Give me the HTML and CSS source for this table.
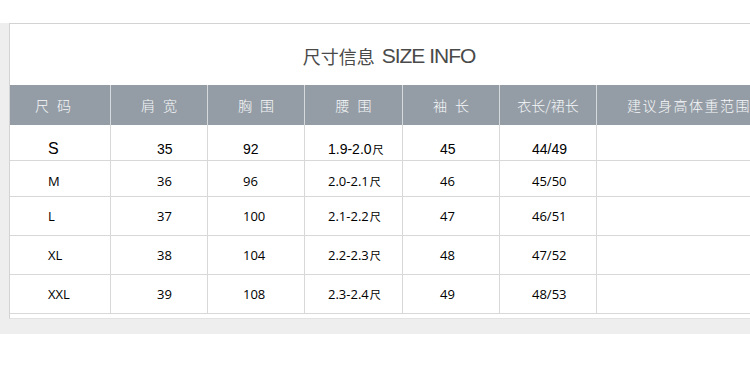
FILE: index.html
```html
<!DOCTYPE html>
<html lang="zh">
<head>
<meta charset="utf-8">
<title>尺寸信息 SIZE INFO</title>
<link rel="stylesheet" href="styles.css">
</head>
<body>
<div class="top-space"></div>
<div class="panel">
  <div class="card">
    <div class="title"><span class="title-cn">尺寸信息</span> <span class="title-en">SIZE INFO</span></div>
    <div class="row head">
      <div class="cell c1">尺 码</div>
      <div class="cell c2">肩 宽</div>
      <div class="cell c3">胸 围</div>
      <div class="cell c4">腰 围</div>
      <div class="cell c5">袖 长</div>
      <div class="cell c6">衣长/裙长</div>
      <div class="cell c7">建议身高体重范围</div>
    </div>
    <div class="row data first">
      <div class="cell c1"><span class="big">S</span></div>
      <div class="cell c2">35</div>
      <div class="cell c3">92</div>
      <div class="cell c4">1.9-2.0<span class="unit">尺</span></div>
      <div class="cell c5">45</div>
      <div class="cell c6">44/49</div>
      <div class="cell c7"></div>
    </div>
    <div class="row data short">
      <div class="cell c1">M</div>
      <div class="cell c2">36</div>
      <div class="cell c3">96</div>
      <div class="cell c4">2.0-2.1<span class="unit">尺</span></div>
      <div class="cell c5">46</div>
      <div class="cell c6">45/50</div>
      <div class="cell c7"></div>
    </div>
    <div class="row data">
      <div class="cell c1">L</div>
      <div class="cell c2">37</div>
      <div class="cell c3">100</div>
      <div class="cell c4">2.1-2.2<span class="unit">尺</span></div>
      <div class="cell c5">47</div>
      <div class="cell c6">46/51</div>
      <div class="cell c7"></div>
    </div>
    <div class="row data">
      <div class="cell c1">XL</div>
      <div class="cell c2">38</div>
      <div class="cell c3">104</div>
      <div class="cell c4">2.2-2.3<span class="unit">尺</span></div>
      <div class="cell c5">48</div>
      <div class="cell c6">47/52</div>
      <div class="cell c7"></div>
    </div>
    <div class="row data">
      <div class="cell c1">XXL</div>
      <div class="cell c2">39</div>
      <div class="cell c3">108</div>
      <div class="cell c4">2.3-2.4<span class="unit">尺</span></div>
      <div class="cell c5">49</div>
      <div class="cell c6">48/53</div>
      <div class="cell c7"></div>
    </div>
  </div>
</div>
</body>
</html>
```

FILE: styles.css
```css
html, body {
  margin: 0;
  padding: 0;
  background: #ffffff;
  overflow: hidden;
  width: 750px;
  height: 365px;
}

body {
  font-family: "Noto Sans CJK SC", "Noto Sans", sans-serif;
}

.top-space {
  height: 23px;
}

.panel {
  background: #eeeeee;
  padding: 0 0 15px 9px;
}

.card {
  box-sizing: border-box;
  width: 760px;
  background: #ffffff;
  border: 1px solid #d3d3d3;
  border-bottom-color: #e2e2e2;
  padding-bottom: 4px;
}

.title {
  height: 61px;
  display: flex;
  align-items: center;
  justify-content: center;
  gap: 7px;
  color: #4a4a4a;
  padding-top: 2px;
  box-sizing: border-box;
}

.title-cn {
  font-family: "Noto Sans CJK SC", sans-serif;
  font-size: 18px;
}

.title-en {
  font-family: "Liberation Sans", Arial, sans-serif;
  font-size: 21px;
  letter-spacing: -1px;
}

.row {
  display: grid;
  grid-template-columns: 101px 97px 97px 98px 97px 97px 1fr;
  box-sizing: border-box;
}

.cell {
  box-sizing: border-box;
  border-right: 1px solid #d8d8d8;
  display: flex;
  align-items: center;
  white-space: nowrap;
}

.head {
  height: 40px;
  background: #949da6;
  color: #f7f8f9;
  font-family: "Noto Sans CJK SC", sans-serif;
  font-size: 14px;
  font-weight: 300;
  word-spacing: 5px;
}

.head .cell {
  justify-content: center;
  border-right-color: #d6dadd;
}

.head .c1 {
  justify-content: flex-start;
  padding-left: 25px;
}

.head .c7 {
  justify-content: flex-start;
  padding-left: 30px;
  letter-spacing: 1.5px;
  border-right: none;
}

.data {
  height: 39px;
  border-bottom: 1px solid #d8d8d8;
  font-family: "Open Sans", "Noto Sans", sans-serif;
  font-size: 13px;
  font-weight: 500;
  color: #000000;
}

.data.first {
  height: 36px;
  font-family: "Liberation Sans", Arial, sans-serif;
  font-size: 14px;
  font-weight: 400;
}

.data.first .cell {
  padding-top: 12px;
}

.data.short {
  height: 36px;
}

.data.short .cell {
  padding-top: 4px;
}

.data .c1 { padding-left: 38px; }
.data .c2 { padding-left: 46px; }
.data .c3 { padding-left: 35px; }
.data .c4 { padding-left: 23px; }
.data .c5 { padding-left: 37px; }
.data .c6 { padding-left: 32px; }
.data .c7 { border-right: none; }

.big {
  font-size: 16px;
}

.unit {
  font-family: "Noto Sans CJK SC", sans-serif;
  font-size: 11px;
  font-weight: 400;
  margin-left: 1px;
}
```
